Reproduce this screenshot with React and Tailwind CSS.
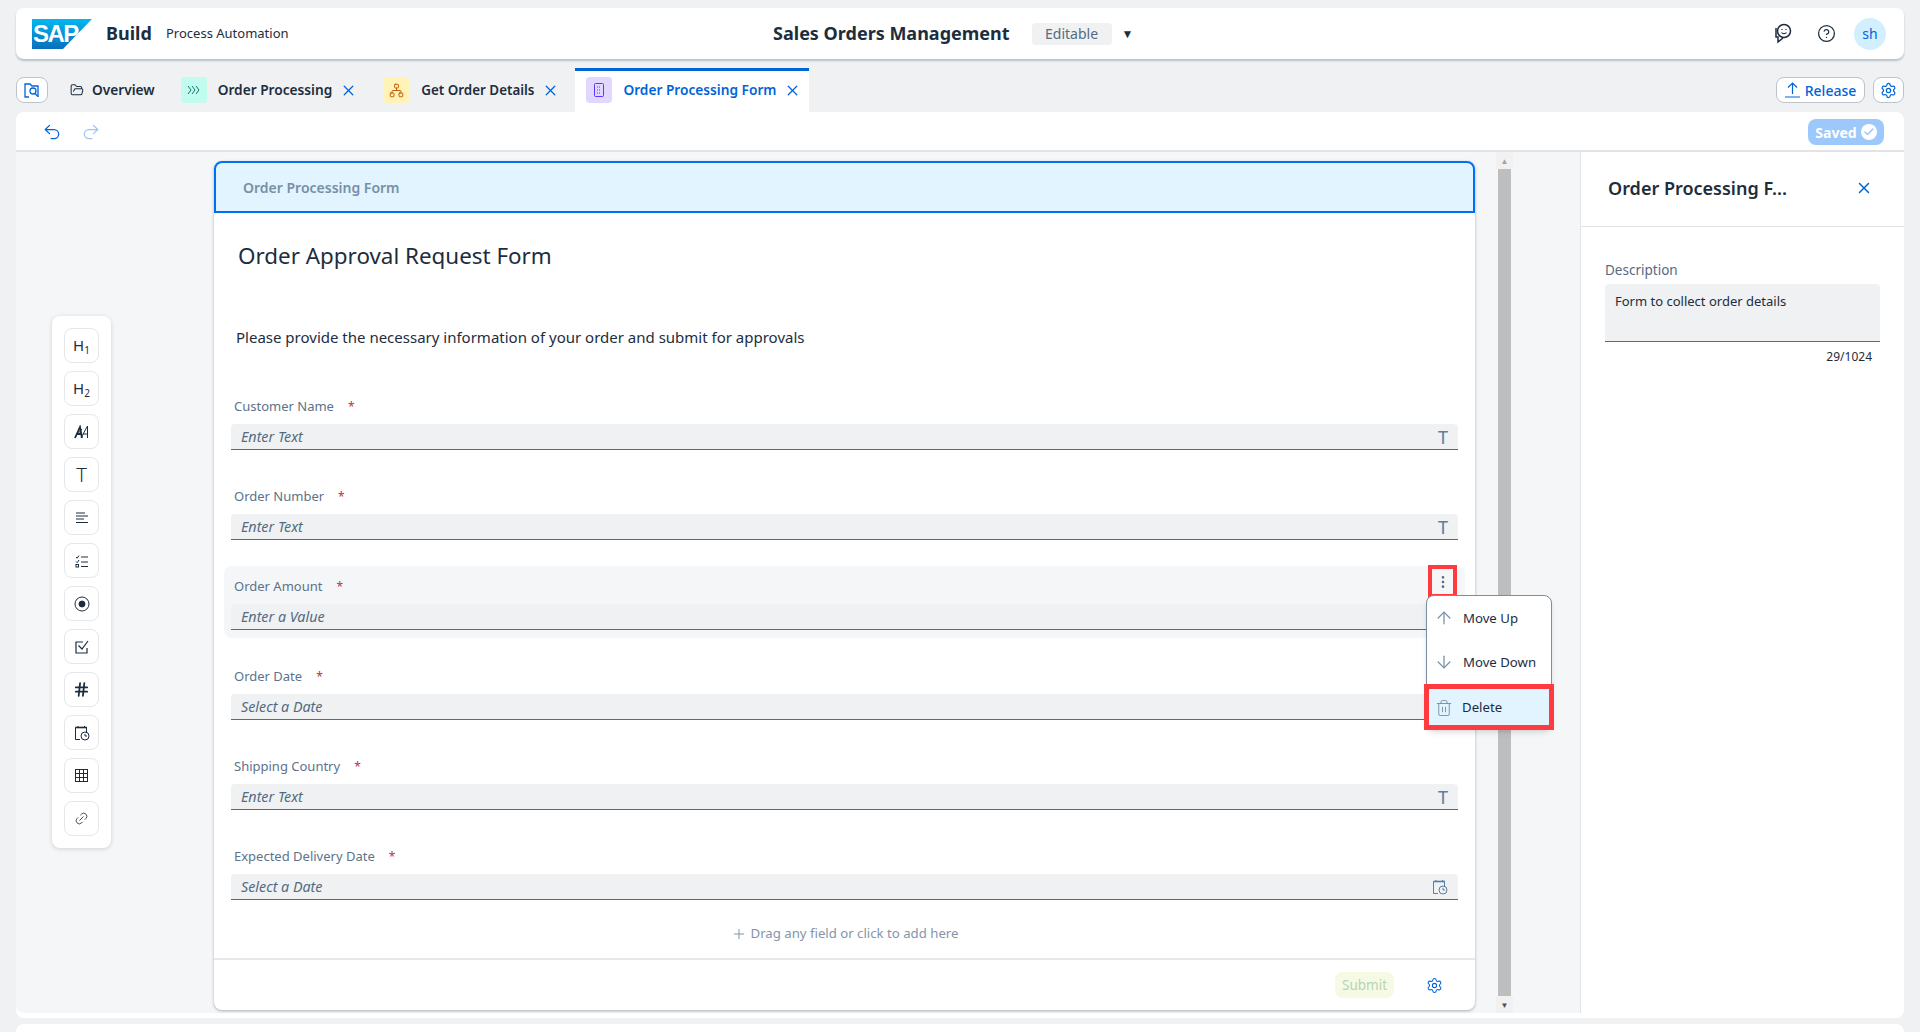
import { ArrowUp, ArrowDown, Trash2, X, Undo2, Redo2, CircleHelp, Check, Settings, Plus, Hash, Link2, FolderOpen, Network, MoreVertical } from "lucide-react";

const fields = [
  { label: "Customer Name", hint: "Enter Text", icon: "text" },
  { label: "Order Number", hint: "Enter Text", icon: "text" },
  { label: "Order Amount", hint: "Enter a Value", active: true },
  { label: "Order Date", hint: "Select a Date" },
  { label: "Shipping Country", hint: "Enter Text", icon: "text" },
  { label: "Expected Delivery Date", hint: "Select a Date", icon: "date" },
];

function CalendarClockIcon({ size = 16, className = "" }) {
  return (
    <svg width={size} height={size} viewBox="0 0 16 16" fill="none" stroke="currentColor" strokeWidth="1" className={className}>
      <path d="M6 14.5H1.5V2.5H12.5V7" />
      <path d="M1.5 2.5H13" strokeWidth="1.6" />
      <path d="M4 1V3M10.5 1V3" />
      <circle cx="11" cy="11" r="4" />
      <path d="M11 8.8V11H13" />
    </svg>
  );
}

const tools = [
  <span className="text-[15px] leading-none">H<sub className="text-[10px]">1</sub></span>,
  <span className="text-[15px] leading-none">H<sub className="text-[10px]">2</sub></span>,
  <svg width="16" height="14" viewBox="0 0 16 14" fill="none" stroke="currentColor">
    <path d="M1 13L6 2L8 13M2.5 9H7.5" strokeWidth="1.8" />
    <path d="M7 13L13.5 1V13M9 9H13.5" strokeWidth="1" />
    <path d="M1 12L8 4" strokeWidth="1" />
  </svg>,
  <span className="text-[20px] leading-none font-light">T</span>,
  <svg width="12" height="12" viewBox="0 0 12 12" stroke="currentColor" strokeWidth="1"><path d="M0 1H9M0 4H12M0 7H8M0 10.5H12" /></svg>,
  <svg width="14" height="14" viewBox="0 0 14 14" fill="none" stroke="currentColor" strokeWidth="1">
    <path d="M1 3L2.2 4.2L4 1.5M1 7.5L2.2 8.7L4 6" />
    <path d="M6 3H13M6 8H13M6 12.5H13" />
    <rect x="1" y="10.5" width="2.5" height="2.5" />
  </svg>,
  <svg width="16" height="16" viewBox="0 0 16 16" fill="none" stroke="currentColor" strokeWidth="1">
    <circle cx="8" cy="8" r="7" />
    <circle cx="8" cy="8" r="3" fill="currentColor" />
  </svg>,
  <svg width="14" height="14" viewBox="0 0 14 14" fill="none" stroke="currentColor" strokeWidth="1.2">
    <path d="M8 2H1V13H12V8" />
    <path d="M3.5 5.5L7 9L13 1" />
  </svg>,
  <Hash size={17} strokeWidth={2.5} />,
  <CalendarClockIcon />,
  <svg width="13" height="13" viewBox="0 0 13 13" fill="none" stroke="currentColor" strokeWidth="1">
    <rect x="0.5" y="0.5" width="12" height="12" />
    <path d="M0.5 4.5H12.5M0.5 8.5H12.5M4.5 0.5V12.5M8.5 0.5V12.5" />
  </svg>,
  <Link2 size={15} strokeWidth={1.25} className="-rotate-45" />,
];

function SapLogo() {
  return (
    <svg width="60" height="30" viewBox="0 0 60 30">
      <defs>
        <linearGradient id="sapBlue" x1="0" y1="0" x2="0" y2="1">
          <stop offset="0" stopColor="#00b8f1" />
          <stop offset="1" stopColor="#0a6ebd" />
        </linearGradient>
      </defs>
      <path d="M0 0H60L31 30H0Z" fill="url(#sapBlue)" />
      <text x="1" y="23" fontFamily="'Liberation Sans', sans-serif" fontSize="24" fontWeight="700" fill="#fff" letterSpacing="-1.5">SAP</text>
    </svg>
  );
}

function Field({ field }) {
  return (
    <div className={`relative h-[72px] -mx-[7px] px-[7px] pt-[10px] rounded-lg ${field.active ? "bg-[#f5f6f7]" : ""}`}>
      <div className="h-[20px] pl-[3px] text-[13px] leading-[20px] text-[#5b738b]">
        {field.label}
        <span className="ml-[14px] text-[12px] text-[#c0304a]">*</span>
      </div>
      <div className="mt-[8px] h-[26px] flex items-center justify-between px-[10px] rounded-t bg-[#eff1f2] border-b border-[#556b82]">
        <span className="text-[14.3px] italic text-[#556b82]">{field.hint}</span>
        {field.icon === "text" && <span className="text-[18px] leading-none text-[#5d7ea3]">T</span>}
        {field.icon === "date" && <CalendarClockIcon className="text-[#5d7ea3]" />}
      </div>
    </div>
  );
}

export default function App() {
  return (
    <div className="w-[1920px] h-[1032px] overflow-hidden bg-[#eff1f2] font-['Noto_Sans',sans-serif] text-[#1d2d3e]">
      {/* Shell bar */}
      <div className="mx-4 mt-2 h-[51px] rounded-lg bg-white shadow-[0_2px_2px_rgba(85,107,130,0.35)] flex items-center pl-4 pr-[18px]">
        <SapLogo />
        <span className="ml-[14px] w-[60px] text-[18px] font-bold">Build</span>
        <span className="text-[13px]">Process Automation</span>
        <div className="flex-1 flex items-center justify-center pr-[155px]">
          <span className="text-[18px] font-bold">Sales Orders Management</span>
          <span className="ml-[22px] h-[22px] w-[80px] rounded bg-[#eff1f2] text-[14px] leading-[22px] text-center text-[#556b82]">Editable</span>
          <span className="ml-[10px] text-[12px]">▼</span>
        </div>
        <svg width="20" height="22" viewBox="0 0 20 22" fill="none" stroke="currentColor" strokeWidth="1.5">
          <circle cx="11" cy="8" r="6.5" />
          <path d="M8.5 9.5C9.5 11 12.5 11 13.5 9.5" strokeWidth="1.2" />
          <path d="M9 6V6.8M13 6V6.8" />
          <path d="M3 5V14H5V19L10 15" />
        </svg>
        <CircleHelp size={19} strokeWidth={1.6} className="ml-[24px]" />
        <div className="ml-[18px] h-8 w-8 rounded-full bg-[#d1efff] text-center text-[14px] leading-8 text-[#0064d9]">sh</div>
      </div>

      {/* Tabs */}
      <div className="mx-4 mt-[9px] h-[44px] flex items-center">
        <button className="h-[26px] w-[32px] rounded-lg border border-[#bcc3ca] bg-white flex items-center justify-center text-[#0064d9]">
          <svg width="16" height="16" viewBox="0 0 16 16" fill="none" stroke="currentColor" strokeWidth="1.3">
            <path d="M5 15H1V2H6L8 4H14V15" />
            <circle cx="9" cy="9" r="3" />
            <path d="M11 11.5L14 14.5" />
          </svg>
        </button>
        <FolderOpen size={14} className="ml-[22px]" strokeWidth={1.75} />
        <span className="ml-[8px] text-[13.7px] font-semibold">Overview</span>
        <span className="ml-[26px] h-[26px] w-[26px] rounded bg-[#c2fcee] flex items-center justify-center text-[#0f766e]">
          <svg width="13" height="10" viewBox="0 0 13 10" fill="none" stroke="currentColor" strokeWidth="1">
            <path d="M1 1L4 5L1 9M5 1L8 5L5 9M9 1L12 5L9 9" />
          </svg>
        </span>
        <span className="ml-[11px] text-[13.7px] font-semibold">Order Processing</span>
        <X size={17} strokeWidth={1.75} className="ml-[8px] text-[#0064d9]" />
        <span className="ml-[26px] h-[26px] w-[26px] rounded bg-[#fff3b8] flex items-center justify-center text-[#c35500]"><Network size={15} strokeWidth={1.5} /></span>
        <span className="ml-[12px] text-[13.4px] font-semibold">Get Order Details</span>
        <X size={17} strokeWidth={1.75} className="ml-[8px] text-[#0064d9]" />
        <div className="ml-[16px] h-[44px] pl-[11px] pr-[8px] pb-[3px] flex items-center bg-white border-t-[3px] border-[#0064d9]">
          <span className="h-[26px] w-[26px] rounded bg-[#e2d8ff] flex items-center justify-center text-[#5d36ff]">
            <svg width="10" height="14" viewBox="0 0 10 14" fill="none" stroke="currentColor" strokeWidth="1">
              <rect x="0.5" y="0.5" width="9" height="13" rx="1" />
              <path d="M3 4H7M3 7H7M3 10H7" strokeDasharray="1 1" />
            </svg>
          </span>
          <span className="ml-[11px] text-[13.7px] font-semibold text-[#0064d9]">Order Processing Form</span>
          <X size={17} strokeWidth={1.75} className="ml-[8px] text-[#0064d9]" />
        </div>
        <div className="flex-1" />
        <button className="h-[26px] w-[89px] rounded-lg border border-[#bcc3ca] bg-white flex items-center justify-center gap-[5px] text-[14px] font-medium text-[#0064d9]">
          <svg width="15" height="16" viewBox="0 0 15 16" fill="none" stroke="currentColor" strokeWidth="1.2">
            <path d="M7.5 12V1M3 5.5L7.5 1L12 5.5M0 15H15" />
          </svg>
          Release
        </button>
        <button className="ml-2 h-[26px] w-[31px] rounded-lg border border-[#bcc3ca] bg-white flex items-center justify-center text-[#0064d9]">
          <Settings size={17} strokeWidth={1.75} />
        </button>
      </div>

      {/* Main white panel */}
      <div className="mx-4 h-[906px] pb-[5px] rounded-t-lg rounded-b-lg bg-white flex flex-col">
        <div className="h-[40px] shrink-0 pt-[2px] border-b-2 border-[#e1e3e6] flex items-center px-[13px]">
          <Undo2 size={20} strokeWidth={1.5} className="ml-[13px] text-[#0064d9]" />
          <Redo2 size={20} strokeWidth={1.5} className="ml-[19px] text-[#9cc4f5]" />
          <div className="flex-1" />
          <span className="mr-[7px] h-[26px] w-[76px] rounded-lg bg-[#9cc8fb] flex items-center justify-center gap-1 text-[14px] font-bold text-white">
            Saved
            <span className="h-4 w-4 rounded-full bg-white flex items-center justify-center"><Check size={12} strokeWidth={3} className="text-[#9cc8fb]" /></span>
          </span>
        </div>

        <div className="flex-1 flex min-h-0">
          {/* Canvas */}
          <div className="relative flex-1 rounded-bl-lg bg-[#f5f6f7] flex">
            <div className="w-[198px] shrink-0 pl-9 pt-[164px]">
              <div className="w-[59px] rounded-lg bg-white shadow-[0_1px_4px_rgba(85,107,130,0.25)] py-3 flex flex-col items-center gap-[8px]">
                {tools.map((icon, i) => (
                  <div key={i} className="h-[35px] w-[35px] rounded-lg border border-[#e5e7ea] bg-white flex items-center justify-center">
                    {icon}
                  </div>
                ))}
              </div>
            </div>

            <div className="mt-[9px] w-[1261px] h-[849px] rounded-lg bg-white shadow-[0_1px_3px_rgba(85,107,130,0.5)] flex flex-col">
              <div className="h-[52px] shrink-0 rounded-t-lg border-2 border-[#0070f2] bg-[#e1f4ff] flex items-center pl-[27px] text-[14px] font-semibold text-[#788fa6]">
                Order Processing Form
              </div>
              <div className="flex-1 px-[17px]">
                <h1 className="ml-[7px] mt-[27px] text-[22.4px] leading-[32px] font-normal">Order Approval Request Form</h1>
                <p className="ml-[5px] mt-[54px] text-[15px] leading-[22px]">Please provide the necessary information of your order and submit for approvals</p>
                <div className="mt-[38px] flex flex-col gap-[18px]">
                  {fields.map((f) => <Field key={f.label} field={f} />)}
                </div>
                <div className="mt-[16px] flex items-center justify-center gap-1 text-[13.2px] text-[#8396a8]">
                  <Plus size={16} strokeWidth={1.5} />Drag any field or click to add here
                </div>
              </div>
              <div className="h-[52px] shrink-0 border-t-2 border-[#e5e7ea] flex items-center justify-end pr-[32px]">
                <span className="h-[26px] w-[59px] rounded-lg bg-[#f5fae5] text-center text-[13.5px] leading-[26px] text-[#b9d3b4]">Submit</span>
                <Settings size={17} strokeWidth={1.5} className="ml-[32px] text-[#0064d9]" />
              </div>
            </div>

            {/* Scrollbar */}
            <div className="ml-[21px] w-[17px] h-full flex flex-col items-center">
              <span className="h-[17px] w-full bg-[#f1f1f1] text-center text-[8px] leading-[17px] text-[#a3a3a3]">▲</span>
              <div className="flex-1 w-[13px] bg-[#bebebe]" />
              <span className="h-[17px] w-full bg-[#f1f1f1] text-center text-[8px] leading-[17px] text-[#505050]">▼</span>
            </div>

            {/* Row menu */}
            <div className="absolute left-[1412px] top-[413px] h-[33px] w-[29px] border-[4px] border-[#ff3b3f] flex items-center justify-center text-[#556b82]">
              <MoreVertical size={16} />
            </div>
            <div className="absolute left-[1410px] top-[443px] w-[126px] h-[135px] rounded-lg border border-[#788fa6] bg-white shadow-md flex flex-col">
              <div className="h-[45px] flex items-center pl-[7px] text-[13.2px]">
                <ArrowUp size={20} strokeWidth={1.5} className="-mt-[1px] text-[#788fa6]" />
                <span className="ml-[9px]">Move Up</span>
              </div>
              <div className="h-[43px] flex items-center pl-[7px] text-[13.2px]">
                <ArrowDown size={20} strokeWidth={1.5} className="-mt-[1px] text-[#788fa6]" />
                <span className="ml-[9px]">Move Down</span>
              </div>
            </div>
            <div className="absolute left-[1408px] top-[532px] w-[130px] h-[46px] pt-[1px] border-[5px] border-[#ff3b3f] bg-[#e1f4ff] flex items-center pl-[6px] text-[13.2px]">
              <Trash2 size={18} strokeWidth={1.25} className="text-[#788fa6]" />
              <span className="ml-[9px]">Delete</span>
            </div>
          </div>

          {/* Properties panel */}
          <div className="w-[324px] shrink-0 border-l border-[#e1e3e6]">
            <div className="h-[244px] shadow-[-1px_0_0_#e1e3e6]">
              <div className="h-[75px] pb-[2px] border-b border-[#e1e3e6] flex items-center justify-between pl-[27px] pr-[31px]">
                <span className="text-[18px] font-semibold">Order Processing F...</span>
                <X size={18} strokeWidth={2} className="text-[#0064d9]" />
              </div>
              <div className="px-6 pt-[33px]">
                <div className="text-[13.5px] leading-5 text-[#556b82]">Description</div>
                <div className="mt-[4px] h-[58px] rounded-t bg-[#eff1f2] border-b border-[#556b82] px-[10px] pt-[7px] text-[13px] leading-5">Form to collect order details</div>
                <div className="mt-[7px] pr-2 text-right text-[12px] leading-4">29/1024</div>
              </div>
            </div>
          </div>
        </div>
      </div>

      {/* Next page band */}
      <div className="mx-4 mt-[6px] h-4 rounded-t-lg bg-white" />
    </div>
  );
}
